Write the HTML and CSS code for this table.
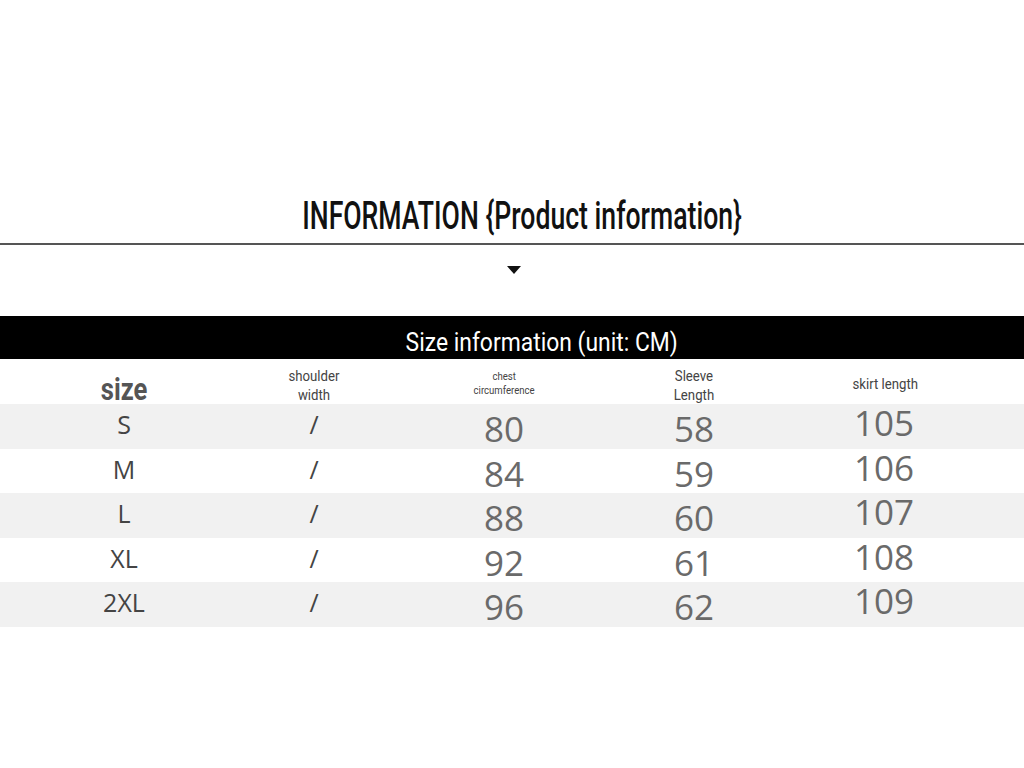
FILE: index.html
```html
<!DOCTYPE html>
<html lang="en">
<head>
<meta charset="utf-8">
<title>Product information</title>
<link rel="stylesheet" href="styles.css">
</head>
<body>
<div class="page">
  <h1 class="title"><span class="cond">INFORMATION {Product information}</span></h1>
  <div class="rule"></div>
  <div class="arrow-row"><span class="arrow"></span></div>
  <div class="bar"><span class="cond-bar">Size information (unit: CM)</span></div>
  <div class="table">
    <div class="row head">
      <div class="cell h-size"><span class="cond-size">size</span></div>
      <div class="cell h-sm"><span class="cond-sm">shoulder<br>width</span></div>
      <div class="cell h-xs"><span class="cond-xs">chest<br>circumference</span></div>
      <div class="cell h-sm"><span class="cond-sm">Sleeve<br>Length</span></div>
      <div class="cell h-sm h-skirt"><span class="cond-sm">skirt length</span></div>
    </div>
    <div class="row stripe">
      <div class="cell sz">S</div><div class="cell sl">/</div><div class="cell num">80</div><div class="cell num">58</div><div class="cell num up">105</div>
    </div>
    <div class="row">
      <div class="cell sz">M</div><div class="cell sl">/</div><div class="cell num">84</div><div class="cell num">59</div><div class="cell num up">106</div>
    </div>
    <div class="row stripe">
      <div class="cell sz">L</div><div class="cell sl">/</div><div class="cell num">88</div><div class="cell num">60</div><div class="cell num up">107</div>
    </div>
    <div class="row">
      <div class="cell sz">XL</div><div class="cell sl">/</div><div class="cell num">92</div><div class="cell num">61</div><div class="cell num up">108</div>
    </div>
    <div class="row stripe">
      <div class="cell sz">2XL</div><div class="cell sl">/</div><div class="cell num">96</div><div class="cell num">62</div><div class="cell num up">109</div>
    </div>
  </div>
</div>
</body>
</html>
```
FILE: styles.css
```css
* { box-sizing: border-box; }
html, body { margin: 0; padding: 0; background: #fff; }
body { width: 1024px; height: 768px; overflow: hidden; }
.page { padding-top: 193px; }
.title {
  margin: 0;
  height: 50px;
  text-align: center;
  font-family: Roboto, "Liberation Sans", sans-serif;
  font-weight: 500;
  font-size: 38px;
  line-height: 46px;
  color: #111;
  padding-left: 20px;
  white-space: nowrap;
}
.cond { display: inline-block; transform: scaleX(0.70); }
.rule { height: 2px; background: #555; }
.arrow-row { height: 71px; display: flex; justify-content: center; padding-top: 21px; padding-left: 4px; }
.arrow {
  width: 0; height: 0;
  border-left: 7px solid transparent;
  border-right: 7px solid transparent;
  border-top: 8px solid #111;
}
.bar {
  height: 43px;
  background: #000;
  color: #fff;
  text-align: center;
  font-family: Roboto, "Liberation Sans", sans-serif;
  font-size: 26px;
  line-height: 52px;
  padding-left: 60px;
  white-space: nowrap;
}
.cond-bar { display: inline-block; transform: scaleX(0.88); }
.table { font-family: "Open Sans", "Noto Sans", sans-serif; }
.row {
  display: grid;
  grid-template-columns: repeat(5, 190px);
  padding-left: 29px;
  height: 44.5px;
}
.stripe { background: #f1f1f1; }
.cell { text-align: center; white-space: nowrap; }
.head { height: 45px; }
.h-size {
  font-family: Roboto, "Liberation Sans", sans-serif;
  font-weight: bold;
  font-size: 32px;
  color: #555;
  line-height: 30px;
  padding-top: 15px;
}
.cond-size { display: inline-block; transform: scaleX(0.8); }
.cond-sm { display: inline-block; transform: scaleX(0.88); }
.cond-xs { display: inline-block; transform: scaleX(0.87); }
.h-sm {
  font-family: Roboto, "Liberation Sans", sans-serif;
  font-size: 15px;
  line-height: 19px;
  color: #444;
  padding-top: 8px;
}
.h-xs {
  font-family: Roboto, "Liberation Sans", sans-serif;
  font-size: 11px;
  line-height: 14px;
  color: #444;
  padding-top: 11px;
}
.h-skirt { padding-top: 16px; padding-left: 2px; }
.sz { font-size: 25px; color: #444; line-height: 40px; }
.sl { font-size: 25px; color: #444; line-height: 40px; }
.num { font-size: 35px; color: #6a6a6a; line-height: 49px; }
.up { line-height: 38px; }
```
